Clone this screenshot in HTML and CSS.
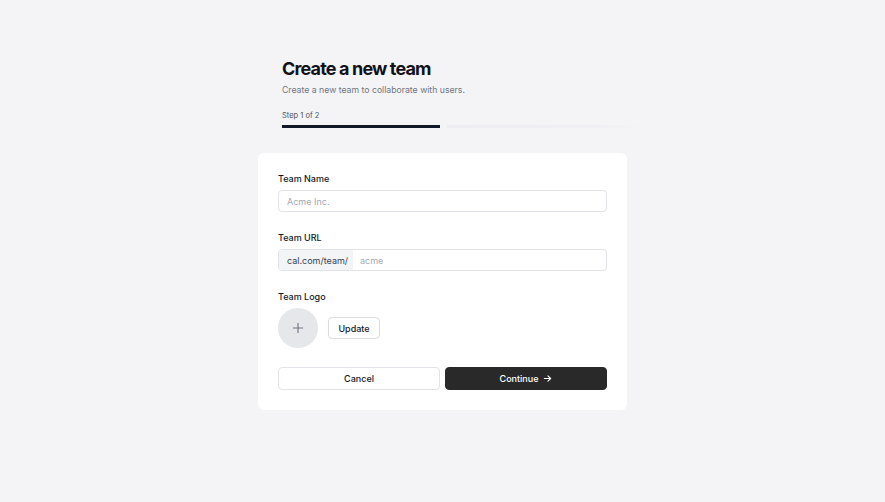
FILE: index.html
```html
<!DOCTYPE html>
<html>
<head>
<meta charset="utf-8">
<link rel="stylesheet" href="styles.css">
</head>
<body>
<main class="page">
  <div class="wrap">
    <header class="head">
      <h1 class="title">Create a new team</h1>
      <p class="sub">Create a new team to collaborate with users.</p>
      <p class="step">Step 1 of 2</p>
      <div class="progress">
        <span class="seg seg-on"></span>
        <span class="seg seg-off"></span>
      </div>
    </header>
    <section class="card">
      <label class="label">Team Name</label>
      <div class="input"><span class="ph">Acme Inc.</span></div>
      <label class="label gap">Team URL</label>
      <div class="input url"><span class="prefix">cal.com/team/</span><span class="ph">acme</span></div>
      <label class="label gap">Team Logo</label>
      <div class="logo-row">
        <div class="avatar">
          <svg width="12" height="12" viewBox="0 0 12 12"><path d="M6 1v10M1 6h10" stroke="#6b7280" stroke-width="1.1" fill="none"/></svg>
        </div>
        <button class="btn-update">Update</button>
      </div>
      <div class="actions">
        <button class="btn btn-cancel">Cancel</button>
        <button class="btn btn-continue">Continue
          <svg width="9" height="9" viewBox="0 0 10 10"><path d="M1.5 5h7M5.5 2l3 3-3 3" stroke="#fff" stroke-width="1.2" fill="none" stroke-linecap="round" stroke-linejoin="round"/></svg>
        </button>
      </div>
    </section>
  </div>
</main>
</body>
</html>
```
FILE: styles.css
```css
* { box-sizing: border-box; }
html, body { margin: 0; padding: 0; }
body {
  background: #f4f4f7;
  font-family: Inter, "Noto Sans", sans-serif;
  color: #111827;
  width: 885px;
  height: 502px;
  overflow: hidden;
}
.page {
  display: flex;
  justify-content: center;
  padding-top: 58px;
}
.wrap { width: 369px; }
.head { padding: 0 24px; }
.title {
  margin: 0;
  font-size: 18px;
  line-height: 22px;
  font-weight: 700;
  letter-spacing: -0.85px;
  color: #111118;
}
.sub {
  margin: 4px 0 0;
  font-size: 8.7px;
  line-height: 12px;
  color: #70747e;
}
.step {
  margin: 15px 0 0;
  font-size: 7.5px;
  line-height: 10px;
  color: #4b5060;
}
.progress {
  display: flex;
  margin-top: 4px;
  height: 3px;
  gap: 7px;
  width: 360px;
}
.seg { display: block; height: 3px; }
.seg-on { width: 158px; background: #111827; }
.seg-off { flex: 1; background: linear-gradient(90deg, #eeeef2 0%, #f0f0f4 80%, #f4f4f7 100%); }
.card {
  margin-top: 25px;
  background: #fff;
  border-radius: 6px;
  padding: 20px 20px 20px;
  display: flex;
  flex-direction: column;
}
.label {
  display: block;
  font-size: 9px;
  line-height: 12px;
  font-weight: 500;
  color: #111827;
}
.label.gap { margin-top: 20px; }
.input {
  margin-top: 5px;
  height: 22px;
  border: 1px solid #e1e3e8;
  border-radius: 4px;
  display: flex;
  align-items: center;
  padding-left: 8px;
  font-size: 9px;
}
.ph { color: #a3a8b3; }
.input.url { padding-left: 0; overflow: hidden; }
.prefix {
  background: #f3f4f6;
  color: #374151;
  height: 100%;
  display: flex;
  align-items: center;
  padding: 0 7px 0 8px;
  margin-right: 7px;
  width: 74px;
}
.logo-row {
  margin-top: 5px;
  display: flex;
  align-items: center;
  gap: 10px;
}
.avatar {
  width: 40px;
  height: 40px;
  border-radius: 50%;
  background: #e5e7eb;
  display: flex;
  align-items: center;
  justify-content: center;
}
.btn-update {
  width: 52px;
  height: 22px;
  border: 1px solid #d9dce1;
  border-radius: 4px;
  background: #fff;
  font-family: inherit;
  font-size: 9px;
  font-weight: 500;
  color: #111827;
  padding: 0;
}
.actions {
  margin-top: 19px;
  display: flex;
  gap: 5px;
}
.btn {
  flex: 1;
  height: 23px;
  border-radius: 4px;
  font-family: inherit;
  font-size: 9px;
  font-weight: 500;
  display: flex;
  align-items: center;
  justify-content: center;
  gap: 5px;
  padding: 0;
}
.btn-cancel {
  background: #fff;
  border: 1px solid #e1e3e8;
  color: #111827;
}
.btn-continue {
  background: #292929;
  border: 1px solid #292929;
  color: #fff;
}
```
